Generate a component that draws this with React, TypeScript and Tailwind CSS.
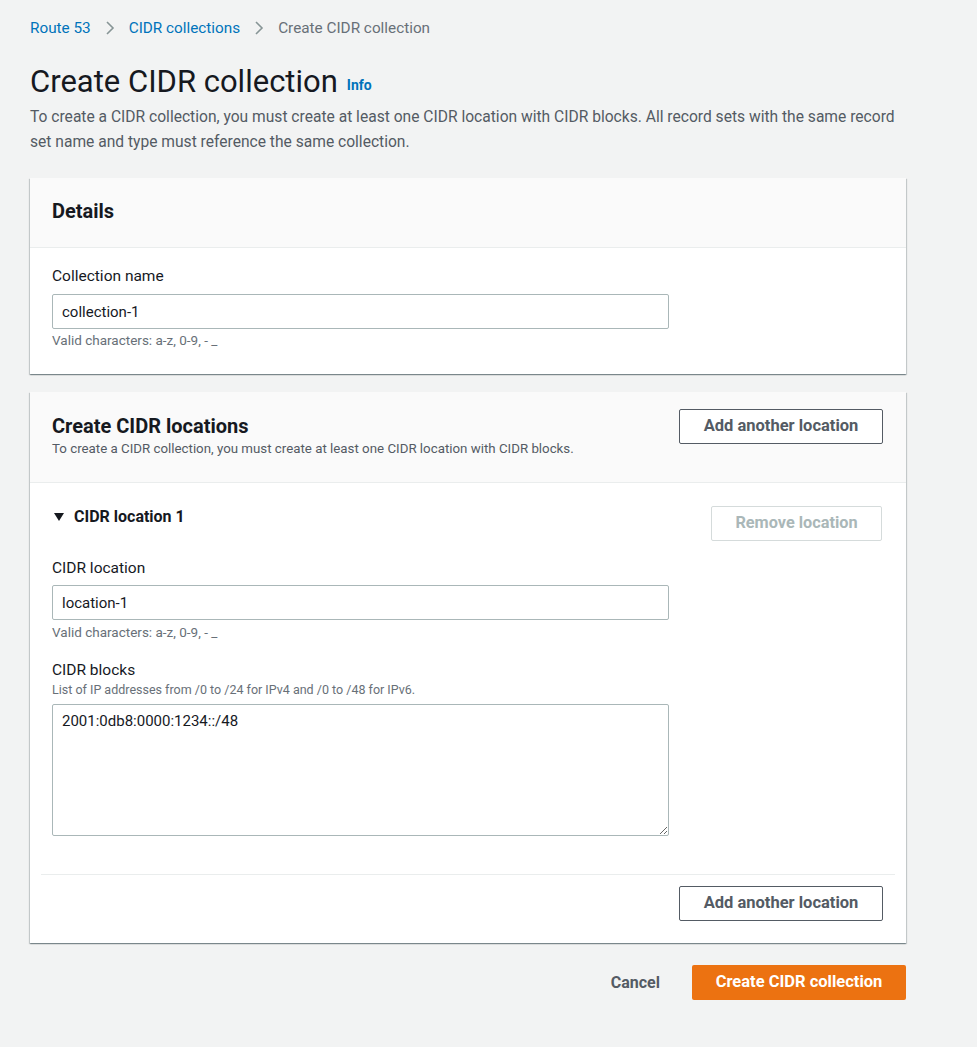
import React from 'react';

const font = { fontFamily: 'Roboto, "Noto Sans", Arial, sans-serif' };

function Chevron() {
  return (
    <svg width="10" height="16" viewBox="0 0 10 16" className="mx-[14px]">
      <path d="M2 2l6 6-6 6" fill="none" stroke="#879596" strokeWidth="1.6" />
    </svg>
  );
}

function OutlineButton({ children }: { children: React.ReactNode }) {
  return (
    <button className="h-[35px] w-[204px] rounded-[2px] border-[1.5px] border-[#545b64] bg-white text-[16.5px] font-bold text-[#545b64]">
      {children}
    </button>
  );
}

const cardShadow =
  'shadow-[0_1px_1px_0_rgba(0,28,36,0.3),1px_1px_1px_0_rgba(0,28,36,0.15),-1px_1px_1px_0_rgba(0,28,36,0.15)]';

export default function App() {
  return (
    <div className="min-h-[1047px] w-[977px] bg-[#f2f3f3] pl-[30px] pr-[71px] pt-[17px]" style={font}>
      {/* Breadcrumbs */}
      <nav className="flex items-center text-[15.3px] leading-[22px]">
        <span className="text-[#0073bb]">Route 53</span>
        <Chevron />
        <span className="text-[#0073bb]">CIDR collections</span>
        <Chevron />
        <span className="text-[#687078]">Create CIDR collection</span>
      </nav>

      {/* Header */}
      <div className="mt-[24px] flex items-end">
        <h1 className="text-[31px] leading-[38px] text-[#16191f]">Create CIDR collection</h1>
        <span className="mb-[5px] ml-[9px] text-[14px] font-bold text-[#0073bb]">Info</span>
      </div>
      <p className="mt-[4px] text-[15.6px] leading-[25px] text-[#545b64]">
        To create a CIDR collection, you must create at least one CIDR location with CIDR blocks. All record sets with the same record set name and type must reference the same collection.
      </p>

      {/* Details */}
      <section className={`mt-[23px] bg-white ${cardShadow}`}>
        <div className="flex h-[70px] items-center border-b border-[#eaeded] bg-[#fafafa] px-[22px] pb-[4px]">
          <h2 className="text-[20px] font-bold text-[#16191f]">Details</h2>
        </div>
        <div className="px-[22px] pb-[26px] pt-[18px]">
          <label className="block text-[15.5px] leading-[20px] text-[#16191f]">Collection name</label>
          <input
            defaultValue="collection-1"
            className="mt-[8px] block h-[35px] w-[617px] rounded-[2px] border border-[#aab7b8] px-[9px] text-[15px] text-[#16191f] outline-none"
          />
          <p className="mt-[3px] text-[13.5px] leading-[16px] text-[#687078]">Valid characters: a-z, 0-9, - _</p>
        </div>
      </section>

      {/* CIDR locations */}
      <section className={`mt-[18px] bg-white ${cardShadow}`}>
        <div className="flex items-start justify-between border-b border-[#eaeded] bg-[#fafafa] pb-[25px] pl-[22px] pr-[23px] pt-[17px]">
          <div className="pt-[5px]">
            <h2 className="text-[20px] font-bold leading-[24px] text-[#16191f]">Create CIDR locations</h2>
            <p className="mt-[3px] text-[13.3px] leading-[16px] text-[#545b64]">
              To create a CIDR collection, you must create at least one CIDR location with CIDR blocks.
            </p>
          </div>
          <OutlineButton>Add another location</OutlineButton>
        </div>

        <div className="pl-[22px] pr-[24px] pt-[23px]">
          <div className="flex items-start justify-between">
            <div className="mt-[1px] flex items-center text-[16px] font-bold leading-[20px] text-[#16191f]">
              <svg width="10" height="8" viewBox="0 0 10 8" className="ml-[2px] mr-[10px]">
                <path d="M0 0h10L5 8z" fill="#16191f" />
              </svg>
              CIDR location 1
            </div>
            <button className="h-[35px] w-[171px] rounded-[2px] border border-[#d5dbdb] bg-white text-[16.3px] font-bold text-[#aab7b8]">
              Remove location
            </button>
          </div>

          <label className="mt-[17px] block text-[15.5px] leading-[20px] text-[#16191f]">CIDR location</label>
          <input
            defaultValue="location-1"
            className="mt-[7px] block h-[35px] w-[617px] rounded-[2px] border border-[#aab7b8] px-[9px] text-[15px] text-[#16191f] outline-none"
          />
          <p className="mt-[4px] text-[13.5px] leading-[16px] text-[#687078]">Valid characters: a-z, 0-9, - _</p>

          <label className="mt-[20px] block text-[15.5px] leading-[20px] text-[#16191f]">CIDR blocks</label>
          <p className="mt-[1px] text-[12.5px] leading-[17px] text-[#687078]">
            List of IP addresses from /0 to /24 for IPv4 and /0 to /48 for IPv6.
          </p>
          <textarea
            defaultValue="2001:0db8:0000:1234::/48"
            className="mt-[6px] block h-[132px] w-[617px] rounded-[2px] border border-[#aab7b8] px-[9px] py-[6px] text-[15px] leading-[20px] text-[#16191f] outline-none"
          />
        </div>

        <div className="mx-[11px] mt-[38px] border-t border-[#eaeded]" />
        <div className="flex justify-end pb-[22px] pr-[23px] pt-[11px]">
          <OutlineButton>Add another location</OutlineButton>
        </div>
      </section>

      {/* Actions */}
      <div className="mt-[22px] flex items-center justify-end">
        <span className="mr-[32px] text-[16px] font-bold text-[#545b64]">Cancel</span>
        <button className="h-[35px] w-[214px] rounded-[2px] bg-[#ec7211] text-[16.5px] font-bold text-white">
          Create CIDR collection
        </button>
      </div>
    </div>
  );
}
